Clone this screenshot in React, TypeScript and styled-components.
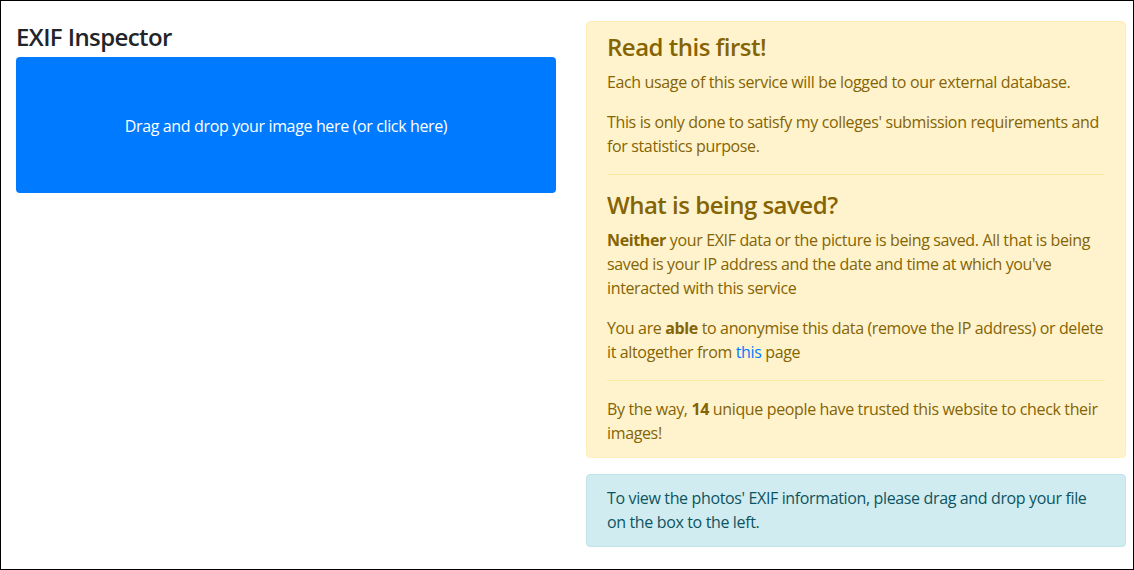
import styled, { createGlobalStyle } from 'styled-components';

const GlobalStyle = createGlobalStyle`
  html, body {
    margin: 0;
    padding: 0;
    background: #ffffff;
  }
  body {
    font-family: 'Open Sans', 'Noto Sans', 'Liberation Sans', sans-serif;
    font-size: 16px;
    line-height: 1.5;
    letter-spacing: -0.36px;
    color: #212529;
  }
  * {
    box-sizing: border-box;
  }
`;

const App = () => {
  return (
    <>
      <GlobalStyle />
      <Page>
        <Column>
          <Title>EXIF Inspector</Title>
          <DropZone>Drag and drop your image here (or click here)</DropZone>
        </Column>
        <Column>
          <Alert variant="warning">
            <Heading>Read this first!</Heading>
            <Text>Each usage of this service will be logged to our external database.</Text>
            <Text>
              This is only done to satisfy my colleges' submission requirements and for statistics
              purpose.
            </Text>
            <Divider />
            <Heading>What is being saved?</Heading>
            <Text>
              <b>Neither</b> your EXIF data or the picture is being saved. All that is being saved is
              your IP address and the date and time at which you've interacted with this service
            </Text>
            <Text>
              You are <b>able</b> to anonymise this data (remove the IP address) or delete it
              altogether from <TextLink href="#">this</TextLink> page
            </Text>
            <Divider />
            <Text>
              By the way, <b>14</b> unique people have trusted this website to check their images!
            </Text>
          </Alert>
          <Alert variant="info">
            <Text>
              To view the photos' EXIF information, please drag and drop your file on the box to the
              left.
            </Text>
          </Alert>
        </Column>
      </Page>
    </>
  );
};

const Page = styled.div`
  width: 1134px;
  height: 570px;
  border: 1px solid #000000;
  padding: 20px 7px 0 15px;
  display: grid;
  grid-template-columns: 540px 540px;
  column-gap: 30px;
  align-items: start;
  overflow: hidden;
`;

const Column = styled.div`
  display: flex;
  flex-direction: column;
`;

const Title = styled.h4`
  margin: 2px 0 5px 0;
  font-size: 24px;
  font-weight: 600;
  line-height: 1.2;
  letter-spacing: -0.6px;
  color: #212529;
`;

const DropZone = styled.div`
  height: 136px;
  padding-top: 2px;
  background: #007bff;
  border-radius: 4px;
  color: #ffffff;
  display: flex;
  align-items: center;
  justify-content: center;
  cursor: pointer;
`;

const alertColors = {
  warning: { bg: '#fff3cd', border: '#ffeeba', text: '#856404', rule: '#ffe8a1' },
  info: { bg: '#d1ecf1', border: '#bee5eb', text: '#0c5460', rule: '#abdde5' },
};

const Alert = styled.div<{ variant: 'warning' | 'info' }>`
  padding: 11px 20px 12px 20px;
  margin-bottom: 16px;
  border: 1px solid ${(p) => alertColors[p.variant].border};
  border-radius: 4px;
  background: ${(p) => alertColors[p.variant].bg};
  color: ${(p) => alertColors[p.variant].text};
  & > p:last-child {
    margin-bottom: 0;
  }
  & hr {
    border-top-color: ${(p) => alertColors[p.variant].rule};
  }
  & b {
    font-weight: 700;
  }
`;

const Heading = styled.h4`
  margin: 0 0 8px 0;
  font-size: 24px;
  font-weight: 600;
  line-height: 1.2;
  letter-spacing: -0.5px;
  color: inherit;
`;

const Text = styled.p`
  margin: 0 0 16px 0;
`;

const Divider = styled.hr`
  margin: 16px 0;
  border: 0;
  border-top: 1px solid;
`;

const TextLink = styled.a`
  color: #007bff;
  text-decoration: none;
`;

export default App;
